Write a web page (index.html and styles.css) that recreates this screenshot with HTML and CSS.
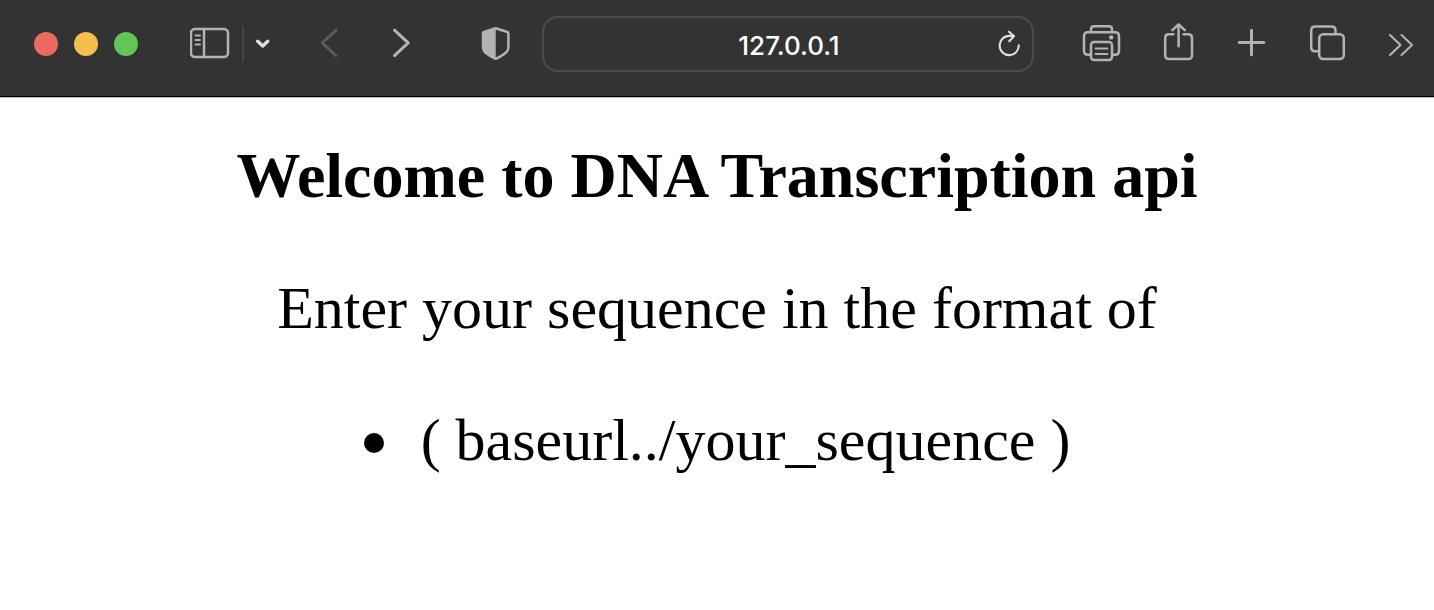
FILE: index.html
```html
<!DOCTYPE html>
<html lang="en">
<head>
<meta charset="utf-8">
<meta name="viewport" content="width=device-width, initial-scale=1">
<title>DNA Transcription api</title>
<link rel="stylesheet" href="styles.css">
</head>
<body>
<header class="toolbar">
  <div class="lights">
    <button class="light light-close" aria-label="Close"></button>
    <button class="light light-minimize" aria-label="Minimize"></button>
    <button class="light light-zoom" aria-label="Zoom"></button>
  </div>
  <div class="sidebar-tools">
    <button class="tool" aria-label="Sidebar">
      <svg width="40" height="48" viewBox="0 0 40 48"><rect x="1" y="9" width="37" height="28" rx="4"/><path d="M14 9v28"/><path class="thin" d="M5.500 15.500h4.500M5.500 20h4.500M5.500 24.500h4.500"/></svg>
    </button>
    <span class="divider"></span>
    <button class="tool tool-bright" aria-label="Tab groups">
      <svg width="14" height="48" viewBox="0 0 14 48"><path class="bold" d="M1.700 21.200L6.700 26 11.700 21.200"/></svg>
    </button>
  </div>
  <div class="history">
    <button class="tool tool-dim" aria-label="Back">
      <svg width="40" height="48" viewBox="0 0 40 48"><path class="medium" d="M28 10.200L14.300 22.800 28 35.600"/></svg>
    </button>
    <button class="tool" aria-label="Forward">
      <svg width="40" height="48" viewBox="0 0 40 48"><path class="medium" d="M13.500 10.200L27.200 22.800 13.500 35.600"/></svg>
    </button>
  </div>
  <button class="tool privacy" aria-label="Privacy report">
    <svg width="40" height="48" viewBox="0 0 40 48"><path d="M19.700 8.200L31.300 12Q32.400 12.400 32.400 13.800V27Q32.400 31.200 28.500 33.700Q24.500 36.700 19.700 38.800Q14.900 36.700 10.900 33.700Q7 31.200 7 27V13.800Q7 12.400 8.100 12Z"/><path class="fill" d="M19.700 8V39Q14.900 36.700 10.900 33.700Q7 31.200 7 27V13.800Q7 12.400 8.100 12Z"/></svg>
  </button>
  <form class="address">
    <input class="address-input" type="text" aria-label="Address" value="127.0.0.1">
    <button class="tool tool-bright" type="button" aria-label="Reload">
      <svg width="24" height="48" viewBox="0 0 24 48"><path class="light-stroke" d="M21.800 25.200A9.600 9.600 0 1 1 12.200 15.900H17"/><path class="light-stroke" d="M12 11.700L17 16.300 12.200 21.200"/></svg>
    </button>
  </form>
  <div class="actions">
    <button class="tool" aria-label="Print">
      <svg width="40" height="48" viewBox="0 0 40 48"><path d="M9 12V9.500Q9 6.300 12.200 6.300H27Q30 6.300 30 9.500V12"/><path d="M9 34.700H6Q2 34.700 2 30.700V16.200Q2 12.200 6 12.200H33Q37 12.200 37 16.200V30.700Q37 34.700 33 34.700H30"/><rect x="9" y="22" width="21" height="18" rx="3"/><path class="thin" d="M13.500 28.500h12M13.500 34h12"/><circle class="dot" cx="29.200" cy="17.400" r="2.200"/></svg>
    </button>
    <button class="tool" aria-label="Share">
      <svg width="40" height="48" viewBox="0 0 40 48"><path d="M16.500 14.300H12Q8.200 14.300 8.200 18.100V35.300Q8.200 39.100 12 39.100H31Q35 39.100 35 35.300V18.100Q35 14.300 31 14.300H26.600M21.600 26.200V4.500M15.400 10.200L21.600 4.300 27.800 10.200"/></svg>
    </button>
    <button class="tool" aria-label="New tab">
      <svg width="40" height="48" viewBox="0 0 40 48"><path class="medium" d="M19.500 10.200V34.800M7.200 22.500H31.800"/></svg>
    </button>
    <button class="tool" aria-label="Tab overview">
      <svg width="40" height="48" viewBox="0 0 40 48"><path d="M12 31.300H8.200Q4.200 31.300 4.200 27.300V10.500Q4.200 6.500 8.200 6.500H24.500Q28.500 6.500 28.500 10.500V14"/><rect x="12.200" y="14.200" width="24.600" height="24.800" rx="4"/></svg>
    </button>
    <button class="tool" aria-label="More">
      <svg width="40" height="48" viewBox="0 0 40 48"><path class="light-stroke" d="M8 15L18.500 25 8 35M19.500 15L30 25 19.500 35"/></svg>
    </button>
  </div>
</header>
<main class="page">
  <h1 class="title">Welcome to DNA Transcription api</h1>
  <p class="intro">Enter your sequence in the format of</p>
  <ul class="formats">
    <li class="format">( baseurl../your_sequence )</li>
  </ul>
</main>
</body>
</html>
```
FILE: styles.css
```css
* {
  box-sizing: border-box;
}

body {
  margin: 0;
  background: #fff;
  color: #000;
  font-family: "Liberation Serif", "Times New Roman", serif;
}

button {
  margin: 0;
  padding: 0;
  border: 0;
  background: none;
}

.toolbar {
  display: flex;
  align-items: center;
  padding: 16px 12px 24px 34px;
  background: #333;
  border-bottom: 1px solid #000;
}

.lights {
  display: flex;
  gap: 16px;
  margin-right: 52px;
}

.light {
  width: 24px;
  height: 24px;
  border-radius: 50%;
}

.light-close { background: #ed6a5f; }
.light-minimize { background: #f5bf4f; }
.light-zoom { background: #62c555; }

.tool {
  display: block;
  flex: none;
  color: #b3b3b3;
}

.tool svg {
  display: block;
  fill: none;
  stroke: currentColor;
  stroke-width: 2.5;
  stroke-linecap: round;
  stroke-linejoin: round;
}

.tool svg .thin { stroke-width: 1.8; }
.tool svg .light-stroke { stroke-width: 2.1; }
.tool svg .medium { stroke-width: 3; }
.tool svg .bold { stroke-width: 3.4; }
.tool svg .fill,
.tool svg .dot {
  fill: currentColor;
  stroke: none;
}

.tool-bright { color: #dfdfdf; }
.tool-dim { color: #5a5a5a; }

.sidebar-tools {
  display: flex;
  align-items: center;
  gap: 12px;
  margin-right: 38px;
}

.divider {
  width: 2px;
  height: 36px;
  background: #444;
}

.history {
  display: flex;
  gap: 33px;
}

.privacy {
  margin: 0 26px 0 55px;
}

.address {
  display: flex;
  flex: 1;
  align-items: center;
  min-width: 0;
  height: 56px;
  margin-right: 48px;
  padding: 0 11px 0 37px;
  border: 2px solid #4b4b4b;
  border-radius: 16px;
}

.address-input {
  flex: 1;
  min-width: 0;
  padding: 4px 0 0;
  border: 0;
  outline: 0;
  background: none;
  color: #fff;
  font: 500 26px/30px Inter, sans-serif;
  text-align: center;
}

.actions {
  display: flex;
  gap: 35px;
}

.page {
  display: flex;
  flex-direction: column;
  align-items: center;
  gap: 60px;
  padding: 42px 8px;
  border-top: 1px solid #bbb;
  font-size: 60px;
  line-height: 72px;
  text-align: center;
}

.title,
.intro,
.formats {
  margin: 0;
  padding: 0;
}

.title {
  font-size: 64px;
}

.formats {
  list-style: none;
}

.format {
  display: flex;
  align-items: center;
  gap: 37px;
}

.format::before {
  content: "";
  width: 20px;
  height: 20px;
  margin-top: 6px;
  border-radius: 50%;
  background: #000;
}
```
